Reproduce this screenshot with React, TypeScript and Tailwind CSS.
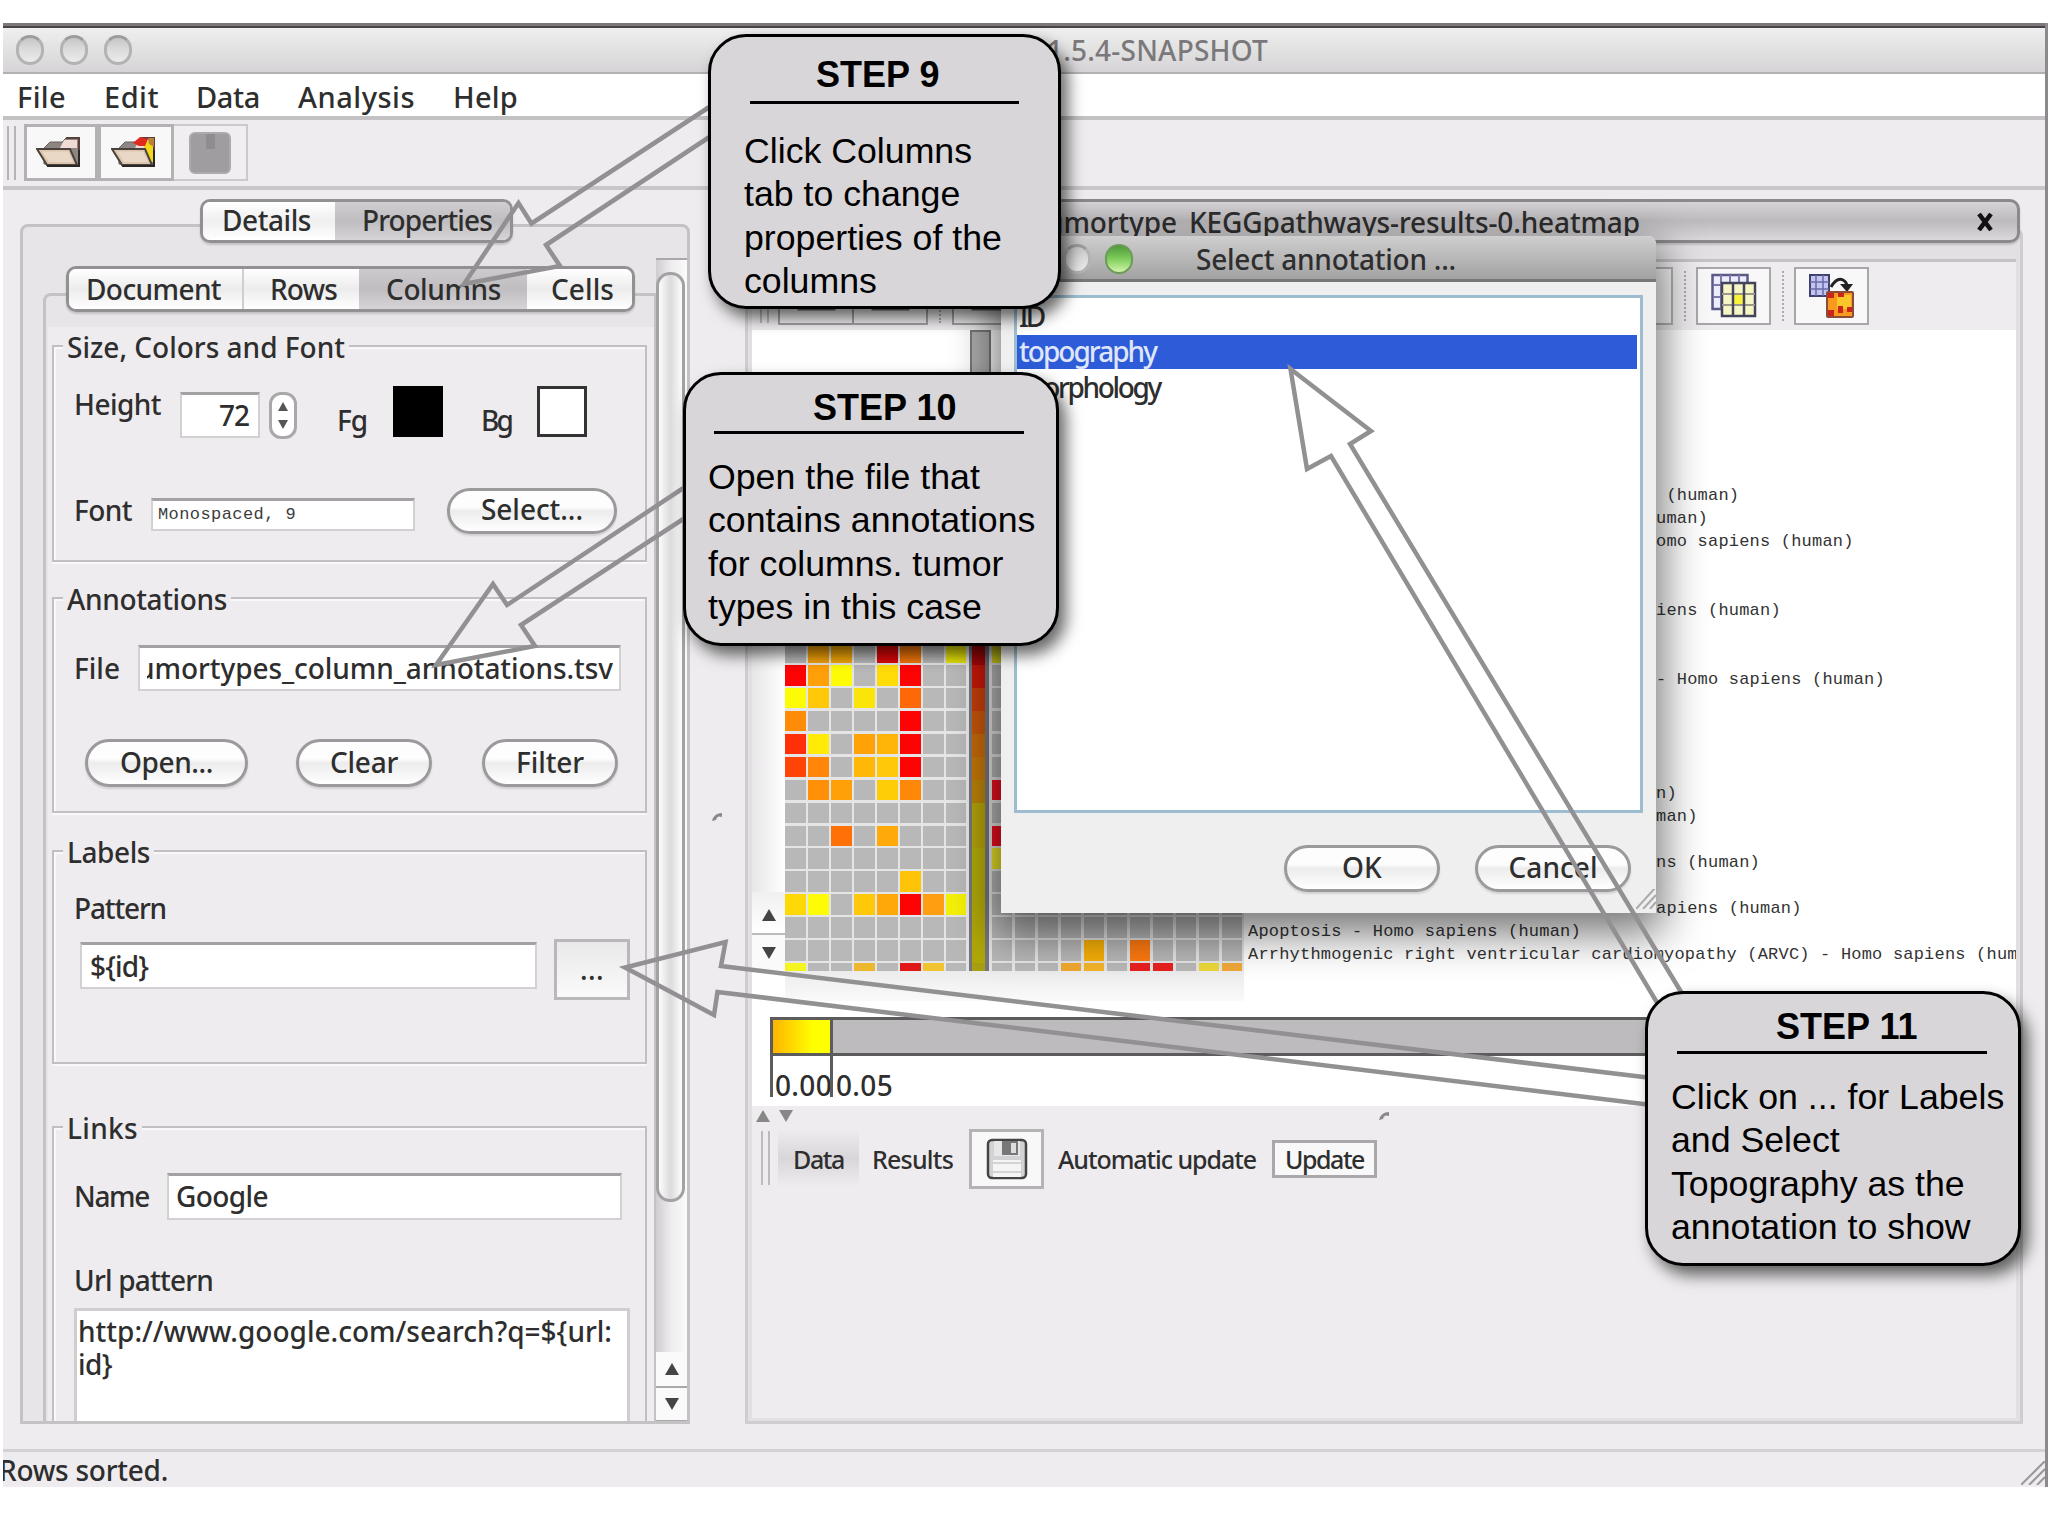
import React, { useLayoutEffect, useRef, useState } from "react";

/** A single line of text whose tracking is tuned so that it fills `w` pixels. */
function T({
  w,
  children,
  className = "",
  size = "text-[28px] leading-[31px]",
}: {
  w: number;
  children: string;
  className?: string;
  size?: string;
}) {
  const ref = useRef<HTMLSpanElement>(null);
  const [ls, setLs] = useState(0);
  useLayoutEffect(() => {
    if (ref.current) {
      const natural = ref.current.getBoundingClientRect().width;
      setLs((w - natural) / Math.max(1, children.length));
    }
  }, []);
  return (
    <span className={"block h-[28px] shrink-0 whitespace-pre " + size + " " + className}>
      <span ref={ref} className="inline-block" style={{ letterSpacing: ls + "px" }}>
        {children}
      </span>
    </span>
  );
}

function Light({ green = false }: { green?: boolean }) {
  return (
    <div
      className={
        green
          ? "h-[30px] w-[28px] rounded-full border-2 border-[#6c9a58] bg-linear-to-b from-[#4f9a3c] via-[#7fce5c] to-[#d0f5a8]"
          : "h-[30px] w-[28px] rounded-full border-[3px] border-[#b3b3b3] border-t-[#9c9c9c] bg-linear-to-b from-[#c6c6c6] via-[#dcdcdc] to-[#ebebeb]"
      }
    />
  );
}

function Pill({ children, className = "" }: { children: React.ReactNode; className?: string }) {
  return (
    <div
      className={
        "flex shrink-0 justify-center rounded-full border-[3px] border-[#9b999b] bg-linear-to-b from-[#fdfdfd] from-40% via-[#ececec] via-50% to-[#ffffff] shadow-[0_2px_2px_rgba(0,0,0,0.12)] " +
        className
      }
    >
      {children}
    </div>
  );
}

function Group({ title, w, children, className = "" }: { title: string; w: number; children: React.ReactNode; className?: string }) {
  return (
    <section className={"ml-1 flex w-[595px] shrink-0 flex-col border-2 border-[#c1bfc1] shadow-[inset_2px_2px_0_#f8f8f8,0_2px_0_#f8f8f8] " + className}>
      <div className="-mt-[15px] ml-[9px] flex self-start bg-[#eeecee] pr-1 pl-[4px]">
        <T w={w}>{title}</T>
      </div>
      {children}
    </section>
  );
}

const field = "shrink-0 overflow-hidden border-2 border-t-[3px] border-[#d2d0d2] border-t-[#a3a1a3] bg-white ";

function Up({ c = "fill-[#444]" }: { c?: string }) {
  return (
    <svg viewBox="0 0 14 12" className={"h-[12px] w-[14px] " + c}>
      <path d="M7 0 14 12H0Z" />
    </svg>
  );
}
function Down({ c = "fill-[#444]" }: { c?: string }) {
  return (
    <svg viewBox="0 0 14 12" className={"h-[12px] w-[14px] " + c}>
      <path d="M0 0H14L7 12Z" />
    </svg>
  );
}

function Folder({ extra = false }: { extra?: boolean }) {
  return (
    <svg viewBox="0 0 46 32" className="h-[32px] w-[46px]">
      <path d="M8 12 14 6H26L30 2H43V28H8Z" fill="#8d8682" stroke="#6b615d" strokeWidth="1" />
      <path d="M28 4H41V12H24Z" fill="#efdad4" />
      <path d="M30 2H43V28" fill="none" stroke="#5a3f3c" strokeWidth="2" />
      {extra && (
        <>
          <path d="M33 5H42V26H33Z" fill="#f2d71e" />
          <path d="M22 7 29 1 37 3 34 10H28Z" fill="#e02a1c" />
          <path d="M37 2H43V11L38 8Z" fill="#b98432" />
        </>
      )}
      <path d="M1 13H34L41 29H11Z" fill="#dcc5ae" stroke="#4a423d" strokeWidth="2" />
      <path d="M6 15.500H32L37 26H13Z" fill="#efe0d0" opacity=".7" />
      <path d="M11 30H43V14" fill="none" stroke="#2b2725" strokeWidth="2" />
    </svg>
  );
}

function Floppy() {
  return (
    <svg viewBox="0 0 42 42" className="h-[42px] w-[42px]">
      <rect x="2" y="2" width="38" height="38" rx="4" fill="#d2d2d4" stroke="#444" strokeWidth="2.500" />
      <rect x="8" y="3" width="26" height="15" fill="#e6e6e6" />
      <rect x="16" y="3" width="16" height="14" fill="#777" />
      <rect x="25" y="5" width="5" height="10" fill="#ddd" />
      <rect x="7" y="22" width="28" height="17" fill="#f4f4f4" />
      <path d="M7 25H35M7 34H35" stroke="#c8c8c8" strokeWidth="1.500" />
    </svg>
  );
}

function GridsIcon() {
  return (
    <svg viewBox="0 0 46 46" className="h-[46px] w-[46px]">
      <rect x="1.500" y="2" width="35" height="34" fill="#ececfb" stroke="#5b5a86" strokeWidth="2.500" />
      <path d="M2 12H37M2 24H37M10 2V36M19 2V36M28 2V36" stroke="#7b7ab0" strokeWidth="2" />
      <rect x="11" y="10" width="33" height="33" fill="#f6f5c4" stroke="#44445c" strokeWidth="2.500" />
      <path d="M22 20H33V32H22Z" fill="#f8f43c" />
      <path d="M11 21H44M11 32H44" stroke="#9a988a" strokeWidth="2" />
      <path d="M22 10V43M33 10V43" stroke="#44445c" strokeWidth="2.500" />
    </svg>
  );
}

function GreyGrid() {
  return (
    <svg viewBox="0 0 46 46" className="h-[46px] w-[46px]">
      <rect x="6" y="4" width="35" height="32" fill="#dedede" stroke="#6a6a6e" strokeWidth="3" />
      <path d="M6 14H41M6 25H41M15 4V36M24 4V36M33 4V36" stroke="#6a6a6e" strokeWidth="2.500" />
    </svg>
  );
}

function ConvertIcon() {
  return (
    <svg viewBox="0 0 46 46" className="h-[46px] w-[46px]">
      <rect x="1" y="2" width="19" height="21" fill="#c3c4ef" stroke="#40406e" strokeWidth="2" />
      <path d="M7 2V23M14 2V23M1 9H20M1 16H20" stroke="#6a6aa6" strokeWidth="1.500" />
      <path d="M22 14Q28 4 34 7Q38 9 38 14" fill="none" stroke="#222" strokeWidth="3" />
      <path d="M31 11H44L38 19Z" fill="#222" />
      <rect x="18" y="19" width="26" height="25" rx="1" fill="#f79a1d" stroke="#8e4b3a" strokeWidth="2" />
      <path d="M28 22H42V36H28Z" fill="#fbc62a" />
      <path d="M19 20H25V25H19ZM29 20H35V24H29ZM19 37H25V43H19ZM29 33H34V40H29ZM38 34H43V39H38Z" fill="#c9251a" />
    </svg>
  );
}

function SplitMark() {
  return (
    <svg viewBox="0 0 10 8" className="h-[8px] w-[10px]">
      <path d="M0 8Q2 0 10 0V4Q5 2 4 7Z" fill="#8a888a" />
    </svg>
  );
}

const g = "#b9b8b9";
const R = "#fd0303";
const Y = "#fdfb05";
const heat: string[][] = [
  [g, "#f5a208", "#f5a808", g, "#e00808", "#f47608", g, "#eae808", "#a80808", "#e0dc20"],
  [R, "#ffa008", Y, g, "#ffdc08", R, g, g, "#c01808"],
  [Y, "#ffc808", g, "#fbe408", g, "#ff6808", g, g, "#c03c08"],
  ["#ff8c08", g, g, g, g, R, g, g, "#c05408"],
  ["#ff3008", "#ffea08", g, "#ffa208", "#ffb408", R, g, g, "#c06808"],
  ["#ff4408", "#ff8608", g, "#ffb808", "#ffc808", R, g, g, "#c07408"],
  [g, "#ff9008", "#ffa008", g, "#ffcc08", "#ff8808", g, g, "#b88008", "#f01020"],
  [g, g, g, g, g, g, g, g, "#b0a008"],
  [g, g, "#ff7008", g, "#ffaa08", g, g, g, "#b0a008", "#f01020"],
  [g, g, g, g, g, g, g, g, "#b0a808", "#ece428"],
  [g, g, g, g, g, "#ffc408", g, g, "#b0a808"],
  ["#ffd808", Y, g, "#ffc808", "#ffa808", R, "#ff9e10", "#f4f008", "#b0a808"],
  [g, g, g, g, g, g, g, g, "#b0a808"],
  [g, g, g, g, g, g, g, g, "#b0a808", g, g, g, g, "#f8b008", g, "#ff7a10"],
  ["#f4f420", g, g, "#ecb830", g, "#e01818", "#f0c430", g, "#a8a010", g, g, g, "#f0a830", "#f4b428", g, "#e82020", "#e82020", g, "#ecd838", "#f0a838"],
];

const labels = [
  " (human)",
  "uman)",
  "omo sapiens (human)",
  "",
  "",
  "iens (human)",
  "",
  "",
  "- Homo sapiens (human)",
  "",
  "",
  "",
  "",
  "n)",
  "man)",
  "",
  "ns (human)",
  "",
  "apiens (human)",
];

function Card({ title, lines, className, head, rule }: { title: string; lines: string[]; className: string; head: string; rule: string }) {
  return (
    <div
      className={
        "absolute flex flex-col rounded-[38px] border-[3px] border-black bg-[#d9d6d9] font-['Liberation_Sans',sans-serif] text-black shadow-[7px_9px_16px_rgba(0,0,0,0.6)] " +
        className
      }
    >
      <div className={"text-[36px] leading-[40px] font-bold whitespace-nowrap " + head}>{title}</div>
      <div className={"h-[2.500px] shrink-0 bg-black " + rule} />
      <div className="text-[35.7px] leading-[43.6px] whitespace-nowrap">
        {lines.map((l) => (
          <div key={l}>{l}</div>
        ))}
      </div>
    </div>
  );
}

function Sidebar() {
  return (
    <aside className="mt-[9px] ml-[17px] flex w-[670px] shrink-0 flex-col">
      <div className="z-10 ml-[180px] flex h-[44px] w-[313px] shrink-0 overflow-hidden rounded-[10px] border-[3px] border-[#929092] shadow-[0_2px_2px_rgba(0,0,0,0.15)]">
        <div className="flex w-[132px] bg-linear-to-b from-white via-[#efefef] to-white pt-[3px] pl-[19px]">
          <T w={89}>Details</T>
        </div>
        <div className="flex flex-1 bg-linear-to-b from-[#d0ced0] via-[#bfbdbf] to-[#d6d4d6] pt-[3px] pl-[27px]">
          <T w={130}>Properties</T>
        </div>
      </div>
      <div className="-mt-[19px] flex h-[1200px] overflow-hidden rounded-t-[8px] border-[3px] border-[#c4c2c4] bg-[#e7e5e7]">
        <div className="flex w-[633px] shrink-0 flex-col">
          <div className="z-10 mt-[39px] ml-[43px] flex h-[46px] w-[569px] shrink-0 overflow-hidden rounded-[10px] border-[3px] border-[#929092] shadow-[0_2px_2px_rgba(0,0,0,0.15)]">
            <div className="flex w-[175px] border-r-2 border-[#d0ced0] bg-linear-to-b from-white via-[#ececec] to-white pt-[5px] pl-[17px]">
              <T w={135}>Document</T>
            </div>
            <div className="flex w-[115px] bg-linear-to-b from-white via-[#ececec] to-white pt-[5px] pl-[26px]">
              <T w={67}>Rows</T>
            </div>
            <div className="flex w-[168px] bg-linear-to-b from-[#cccacc] via-[#bfbdbf] to-[#d6d4d6] pt-[5px] pl-[27px]">
              <T w={115}>Columns</T>
            </div>
            <div className="flex flex-1 bg-linear-to-b from-white via-[#ececec] to-white pt-[5px] pl-[24px]">
              <T w={63}>Cells</T>
            </div>
          </div>
          <div className="-mt-[19px] ml-[20px] flex h-[1130px] w-[613px] shrink-0 flex-col rounded-tl-[8px] border-t-[3px] border-r-2 border-l-[3px] border-[#c4c2c4]">
            <div className="mt-[31px] ml-[2px] flex h-[1100px] flex-col overflow-hidden bg-[#eeecee]">
              <Group title="Size, Colors and Font" w={278} className="mt-[18px] h-[217px]">
                <div className="mt-[26px] ml-[20px] flex h-[60px]">
                  <T w={87} className="mt-[3px] w-[106px]">Height</T>
                  <div className={field + "mt-[6px] h-[46px] w-[80px] pt-[5px] pl-[37px]"}>
                    <T w={30}>72</T>
                  </div>
                  <div className="mt-[6px] ml-[9px] flex h-[47px] w-[28px] flex-col items-center justify-around rounded-[12px] border-[3px] border-[#aaa8aa] bg-white py-[2px]">
                    <svg viewBox="0 0 10 9" className="h-[9px] w-[10px] fill-[#555]"><path d="M5 0 10 9H0Z" /></svg>
                    <svg viewBox="0 0 10 9" className="h-[9px] w-[10px] fill-[#555]"><path d="M0 0H10L5 9Z" /></svg>
                  </div>
                  <T w={30} className="mt-[19px] ml-[40px] w-[56px]">Fg</T>
                  <div className="h-[51px] w-[50px] bg-black" />
                  <T w={30} className="mt-[19px] ml-[38px] w-[56px]">Bg</T>
                  <div className="h-[51px] w-[50px] border-[3px] border-[#333] bg-white" />
                </div>
                <div className="mt-[42px] ml-[20px] flex h-[46px]">
                  <T w={58} className="mt-[7px] w-[77px]">Font</T>
                  <div className={field + "mt-[10px] h-[33px] w-[264px] pl-[5px] font-['Liberation_Mono',monospace]"}>
                    <T w={138} size="text-[17px] leading-[28px]" className="text-[#3c3c3c]">Monospaced, 9</T>
                  </div>
                  <Pill className="ml-[32px] h-[46px] w-[170px] pt-[3px]">
                    <T w={102}>Select...</T>
                  </Pill>
                </div>
              </Group>
              <Group title="Annotations" w={160} className="mt-[35px] h-[216px]">
                <div className="mt-[33px] ml-[20px] flex h-[46px]">
                  <T w={46} className="mt-[8px] w-[64px]">File</T>
                  <div className={field + "flex h-[46px] w-[483px] pt-[5px] pl-[7px]"}>
                    <div className="flex h-[34px] w-[466px] justify-end overflow-hidden">
                      <T w={476}>umortypes_column_annotations.tsv</T>
                    </div>
                  </div>
                </div>
                <div className="mt-[48px] ml-[31px] flex">
                  <Pill className="h-[48px] w-[163px] pt-[5px]"><T w={93}>Open...</T></Pill>
                  <Pill className="ml-[48px] h-[48px] w-[136px] pt-[5px]"><T w={68}>Clear</T></Pill>
                  <Pill className="ml-[50px] h-[48px] w-[136px] pt-[5px]"><T w={68}>Filter</T></Pill>
                </div>
              </Group>
              <Group title="Labels" w={83} className="mt-[37px] h-[214px]">
                <T w={92} className="mt-[28px] ml-[20px]">Pattern</T>
                <div className="mt-[18px] ml-[26px] flex">
                  <div className={field + "mt-[3px] h-[47px] w-[457px] pt-[6px] pl-[8px]"}>
                    <T w={58}>{"${id}"}</T>
                  </div>
                  <div className="ml-[17px] flex h-[61px] w-[76px] justify-center border-[3px] border-[#b9b7b9] bg-linear-to-b from-[#e9e9e9] to-[#fafafa] pt-[12px]">
                    <T w={24}>...</T>
                  </div>
                </div>
              </Group>
              <Group title="Links" w={71} className="mt-[62px] h-[320px]">
                <div className="mt-[32px] ml-[20px] flex">
                  <T w={75} className="mt-[8px] w-[93px]">Name</T>
                  <div className={field + "h-[47px] w-[455px] pt-[5px] pl-[7px]"}>
                    <T w={92}>Google</T>
                  </div>
                </div>
                <T w={139} className="mt-[45px] ml-[20px]">Url pattern</T>
                <div className="mt-[15px] ml-[20px] h-[150px] w-[556px] border-[3px] border-[#cfcdcf] bg-white pt-[5px] pl-[1px]">
                  <T w={534}>{"http://www.google.com/search?q=${url:"}</T>
                  <T w={34} className="mt-[5px]">{"id}"}</T>
                </div>
              </Group>
            </div>
          </div>
        </div>
        <div className="mt-[31px] flex h-[1164px] w-[31px] shrink-0 flex-col border-t-2 border-[#a9a7a9] bg-linear-to-r from-[#cfcdcf] via-[#efedef] to-[#fbfbfb]">
          <div className="mt-[12px] h-[930px] w-[29px] rounded-[14px] border-[3px] border-[#a3a1a3] bg-linear-to-r from-[#fcfcfc] via-[#dddbdd] to-[#fcfcfc]" />
          <div className="mt-[150px] flex h-[36px] items-center justify-center border-b-2 border-[#aaa8aa] bg-[#fafafa]"><Up /></div>
          <div className="flex h-[34px] items-center justify-center border-b-2 border-[#aaa8aa] bg-[#fafafa]"><Down /></div>
        </div>
      </div>
    </aside>
  );
}

function Results() {
  return (
    <main className="mt-[9px] ml-[55px] flex w-[1278px] shrink-0 flex-col">
      <div className="z-10 ml-[5px] flex h-[44px] w-[1270px] shrink-0 rounded-[10px] border-[3px] border-[#8b898b] bg-linear-to-b from-[#d6d4d6] via-[#bcbabc] to-[#dad8da] shadow-[0_2px_2px_rgba(0,0,0,0.15)]">
        <T w={594} className="mt-[5px] ml-[293px] w-[925px]">umortype_KEGGpathways-results-0.heatmap</T>
        <svg viewBox="0 0 18 18" className="mt-[11px] ml-[5px] h-[18px] w-[18px]"><path d="M3 1 15 17M15 1 3 17" stroke="#111" strokeWidth="4.500" /></svg>
      </div>
      <div className="-mt-[15px] flex h-[1196px] flex-col rounded-tr-[8px] border-[3px] border-[#cfcdcf] bg-[#e2e0e2] px-[4px]">
        <div className="mt-[28px] flex h-[1159px] flex-col border-t-[3px] border-[#c4c2c4] bg-[#eeecee]">
          <div className="flex h-[68px] shrink-0 items-start pt-[5px]">
            <div className="ml-[8px] h-[56px] w-[9px] border-x-2 border-[#bbb]" />
            <div className="ml-[9px] flex h-[58px] w-[76px] items-center justify-center border-2 border-[#a3a1a3] bg-[#f2f2f2]"><GreyGrid /></div>
            <div className="-ml-[2px] flex h-[58px] w-[76px] items-center justify-center border-2 border-[#a3a1a3] bg-[#f2f2f2]"><GreyGrid /></div>
            <div className="ml-[11px] h-[56px] border-l-2 border-dotted border-[#aaa]" />
            <div className="ml-[11px] flex h-[58px] w-[76px] items-center justify-center border-2 border-[#a3a1a3] bg-[#f2f2f2]"><GreyGrid /></div>
            <div className="ml-[569px] h-[58px] w-[76px] border-2 border-[#b3b1b3] bg-[#f6f6f6]" />
            <div className="mt-[4px] ml-[11px] h-[50px] border-l-2 border-dotted border-[#aaa]" />
            <div className="ml-[10px] flex h-[58px] w-[75px] items-center justify-center border-2 border-[#a9a7a9] bg-[#f8f8f8]"><GridsIcon /></div>
            <div className="mt-[4px] ml-[11px] h-[50px] border-l-2 border-dotted border-[#aaa]" />
            <div className="ml-[10px] flex h-[58px] w-[75px] items-center justify-center border-2 border-[#a9a7a9] bg-[#f8f8f8]"><ConvertIcon /></div>
          </div>
          <div className="flex h-[776px] shrink-0 flex-col overflow-hidden bg-white">
            <div className="flex h-[641px] shrink-0 overflow-hidden">
              <div className="flex w-[33px] shrink-0 flex-col">
                <div className="h-[250px] shrink-0" />
                <div className="h-[312px] shrink-0 bg-linear-to-r from-[#e8e6e8] to-white" />
                <div className="flex h-[43px] items-center justify-center border-b-2 border-[#bbb] bg-linear-to-b from-[#f0f0f0] to-white pt-[4px]"><Up /></div>
                <div className="flex h-[35px] items-center justify-center bg-[#fafafa]"><Down /></div>
              </div>
              <div className="flex w-[459px] shrink-0 flex-col overflow-hidden">
                <div className="flex h-[312px] shrink-0">
                  <div className="ml-[185px] w-[21px] border-2 border-[#777] bg-[#adabad]" />
                </div>
                {heat.map((row, r) => (
                  <div key={r} className="flex h-[22.950px] shrink-0 gap-[2.400px] bg-[#e6e5e6]">
                    {Array.from({ length: 20 }, (_, c) => (
                      <div
                        key={c}
                        className={
                          c === 8
                            ? "h-[22.950px] w-[20.600px] shrink-0 border-r-[4px] border-l-[3px] border-[#77757f]"
                            : "h-[20.600px] w-[20.600px] shrink-0"
                        }
                        style={{ backgroundColor: row[c] || g }}
                      />
                    ))}
                  </div>
                ))}
              </div>
              <div className="ml-[4px] flex flex-1 flex-col overflow-hidden pt-[155px] font-['Liberation_Mono',monospace] text-[17px] tracking-[0.200px] text-[#333]">
                {labels.map((l, i) => (
                  <div key={i} className="h-[22.950px] shrink-0 pl-[408px] leading-[22.950px] whitespace-pre">{l}</div>
                ))}
                <div className="h-[22.950px] leading-[22.950px] whitespace-pre">Apoptosis - Homo sapiens (human)</div>
                <div className="h-[22.950px] leading-[22.950px] whitespace-pre">Arrhythmogenic right ventricular cardiomyopathy (ARVC) - Homo sapiens (hum</div>
              </div>
            </div>
            <div className="ml-[33px] h-[30px] w-[459px] shrink-0 bg-linear-to-b from-[#ececec] to-[#fafafa]" />
            <div className="mt-[16px] ml-[18px] flex h-[39px] shrink-0 border-[3px] border-r-0 border-[#5d5c5d] bg-[#bdbbbd]">
              <div className="w-[57px] bg-linear-to-r from-[#ffb400] to-[#ffff00] to-70%" />
              <div className="w-[3px] bg-[#5d5c5d]" />
            </div>
            <div className="ml-[18px] flex h-[41px] shrink-0">
              <div className="flex w-[60px] border-l-[3px] border-[#5d5c5d] pt-[14px] pl-[2px]"><T w={57}>0.00</T></div>
              <div className="flex border-l-[3px] border-[#5d5c5d] pt-[14px] pl-[3px]"><T w={57}>0.05</T></div>
            </div>
          </div>
          <div className="flex h-[20px] shrink-0 items-center">
            <div className="ml-[4px] flex gap-[9px]"><Up c="fill-[#888]" /><Down c="fill-[#888]" /></div>
            <div className="ml-[586px]"><SplitMark /></div>
          </div>
          <div className="mt-[3px] flex h-[60px] shrink-0 items-start">
            <div className="mt-[2px] ml-[9px] h-[54px] w-[9px] border-x-2 border-[#bbb]" />
            <div className="ml-[8px] flex h-[58px] w-[81px] bg-linear-to-b from-[#eeecee] via-[#d8d6d8] to-[#eeecee] pt-[15px] pl-[15px]"><T w={51} size="text-[25px] leading-[31px]">Data</T></div>
            <T w={81} size="text-[25px] leading-[31px]" className="mt-[15px] ml-[13px] w-[97px]">Results</T>
            <div className="flex h-[60px] w-[75px] items-center justify-center border-[3px] border-[#b5b3b5] bg-[#f8f8f8]"><Floppy /></div>
            <T w={198} size="text-[25px] leading-[31px]" className="mt-[15px] ml-[14px] w-[214px]">Automatic update</T>
            <div className="mt-[11px] flex h-[38px] w-[105px] justify-center border-[3px] border-[#aaa8aa] bg-[#f8f8f8] pt-[1px]"><T w={79} size="text-[25px] leading-[31px]">Update</T></div>
          </div>
        </div>
      </div>
    </main>
  );
}

function Dialog() {
  return (
    <div className="absolute top-[236px] left-[1001px] flex h-[677px] w-[655px] flex-col rounded-t-[8px] bg-[#efefef] shadow-[0_14px_44px_6px_rgba(0,0,0,0.55)]">
      <div className="flex h-[46px] shrink-0 rounded-t-[8px] border-b-[3px] border-[#777] bg-linear-to-b from-[#d0cfd0] to-[#a3a2a3] pt-[8px] pl-[20px]">
        <div className="flex w-[175px] gap-[14px]"><Light /><Light /><Light green /></div>
        <T w={260}>Select annotation ...</T>
      </div>
      <div className="mt-[13px] ml-[13px] flex h-[518px] w-[629px] shrink-0 flex-col border-[3px] border-[#9dbccf] bg-white pt-[3px]">
        <T w={24} className="ml-[2px] h-[35px]">ID</T>
        <div className="mt-[-1px] h-[34px] w-[620px] bg-[#2e5bd7] pt-[1px]"><T w={137} className="ml-[2px] text-[#dfe6fa]">topography</T></div>
        <T w={141} className="mt-[3px] ml-[2px]">morphology</T>
      </div>
      <div className="mt-[32px] ml-[283px] flex">
        <Pill className="h-[47px] w-[156px] pt-[4px]"><T w={40}>OK</T></Pill>
        <Pill className="ml-[35px] h-[47px] w-[156px] pt-[4px]"><T w={89}>Cancel</T></Pill>
      </div>
      <svg viewBox="0 0 20 20" className="-mt-[3px] h-[20px] w-[20px] self-end"><path d="M0 20 20 -2M7 20 20 6M14 20 20 13" stroke="#aaa" strokeWidth="2" /></svg>
    </div>
  );
}

export default function App() {
  return (
    <div className="relative h-[1536px] w-[2048px] overflow-hidden bg-white font-['Noto_Sans',sans-serif] font-medium text-[#2e2e2e]">
      <div className="isolate flex pt-[23px]">
        <div className="ml-[3px] flex h-[1464px] w-[2042px] shrink-0 flex-col overflow-hidden bg-[#eeecee]">
          <div className="h-[5px] shrink-0 border-b-2 border-[#4a4449] bg-[#7d777c]" />
          <header className="flex h-[46px] shrink-0 border-b-2 border-[#b3b1b3] bg-linear-to-b from-[#efefef] to-[#d6d4d6]">
            <div className="mt-[7px] ml-[13px] flex w-[1031px] gap-[16px]"><Light /><Light /><Light /></div>
            <T w={221} className="mt-[7px] text-[#7a787a]">1.5.4-SNAPSHOT</T>
          </header>
          <nav className="flex h-[46px] shrink-0 border-b-[4px] border-[#c3c1c3] bg-white pt-[8px] pl-[14px]">
            <T w={49} size="text-[29px] leading-[29px]" className="w-[87px]">File</T>
            <T w={55} size="text-[29px] leading-[29px]" className="w-[92px]">Edit</T>
            <T w={64} size="text-[29px] leading-[29px]" className="w-[102px]">Data</T>
            <T w={117} size="text-[29px] leading-[29px]" className="w-[155px]">Analysis</T>
            <T w={65} size="text-[29px] leading-[29px]">Help</T>
          </nav>
          <div className="flex h-[70px] shrink-0 border-b-[4px] border-[#c8c6c8] pt-[4px]">
            <div className="mt-[2px] ml-[4px] h-[54px] w-[9px] border-x-2 border-[#b5b3b5]" />
            <div className="ml-[8px] flex h-[57px] w-[74px] items-center justify-center border-[3px] border-[#b3b1b3] bg-[#f8f8f8] pr-[4px] pb-[2px]"><Folder /></div>
            <div className="flex h-[57px] w-[76px] items-center justify-center border-[3px] border-[#b3b1b3] bg-[#f8f8f8] pr-[4px] pb-[2px]"><Folder extra /></div>
            <div className="flex h-[57px] w-[74px] items-center justify-center border-2 border-l-0 border-[#cbc9cb] bg-[#f0eef0]">
              <div className="flex h-[42px] w-[42px] justify-center rounded-[6px] border-2 border-[#acaaac] bg-[#9f9d9f]"><div className="h-[15px] w-[9px] bg-[#8f8d8f]" /></div>
            </div>
          </div>
          <div className="flex h-[1259px] shrink-0">
            <Sidebar />
            <Results />
          </div>
          <footer className="flex h-[38px] shrink-0 justify-between border-t-[3px] border-[#d3d1d3] pt-[3px]">
            <T w={169} className="-ml-[4px]">Rows sorted.</T>
            <svg viewBox="0 0 24 24" className="mt-[6px] h-[24px] w-[24px]"><path d="M0 24 24 0M8 24 24 8M16 24 24 16" stroke="#999" strokeWidth="2" /></svg>
          </footer>
        </div>
        <div className="h-[1464px] w-[3px] bg-[#8c8a8c]" />
      </div>

      <div className="absolute top-[813px] left-[712px]"><SplitMark /></div>
      <Dialog />

      <svg viewBox="0 0 2048 1536" className="absolute top-0 left-0 h-[1536px] w-[2048px]" fill="none" stroke="#929092" strokeWidth="4.500">
        <path d="M720 100 531.500 223.500 518.500 203 464 284 560 266 546 245 720 130" />
        <path d="M700 477 507 605 493 584 436 665 535 646 521 625 700 508" />
        <path d="M1660 1079 721 966 725.500 942 625 967.500 714 1015 717.500 992 1660 1106" />
        <path d="M1671 1026 1331 456 1307 469 1290.500 369 1371 431 1350 444 1695 1015" />
      </svg>

      <Card
        title="STEP 9"
        lines={["Click Columns", "tab to change", "properties of the", "columns"]}
        className="top-[34px] left-[708px] h-[275px] w-[353px] pl-[33px]"
        head="mt-[18px] ml-[72px]"
        rule="mt-[6px] mb-[26px] ml-[6px] w-[269px]"
      />
      <Card
        title="STEP 10"
        lines={["Open the file that", "contains annotations", "for columns. tumor", "types in this case"]}
        className="top-[372px] left-[683px] h-[274px] w-[376px] pl-[22px]"
        head="mt-[13px] ml-[105px]"
        rule="mt-[3px] mb-[22px] ml-[6px] w-[310px]"
      />
      <Card
        title="STEP 11"
        lines={["Click on ... for Labels", "and Select", "Topography as the", "annotation to show"]}
        className="top-[991px] left-[1645px] h-[275px] w-[376px] pl-[23px]"
        head="mt-[13px] ml-[105px]"
        rule="mt-[4px] mb-[22px] ml-[6px] w-[310px]"
      />
    </div>
  );
}
